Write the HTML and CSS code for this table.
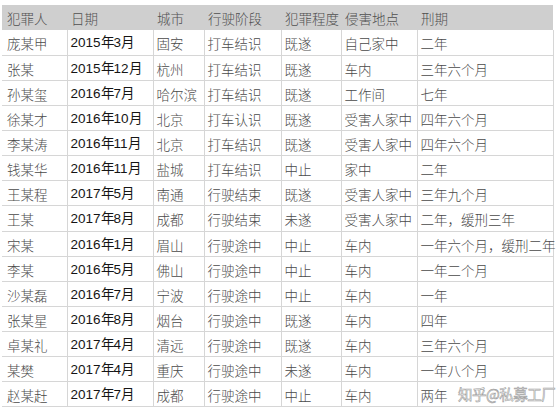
FILE: index.html
```html
<!DOCTYPE html>
<html lang="zh-CN">
<head>
<meta charset="utf-8">
<title>犯罪表</title>
<link rel="stylesheet" href="styles.css">
</head>
<body>
<div class="wrap">
<table class="cases">
<colgroup>
<col class="c1"><col class="c2"><col class="c3"><col class="c4"><col class="c5"><col class="c6"><col class="c7">
</colgroup>
<thead>
<tr><th>犯罪人</th><th>日期</th><th>城市</th><th>行驶阶段</th><th>犯罪程度</th><th>侵害地点</th><th>刑期</th></tr>
</thead>
<tbody>
<tr><td>庞某甲</td><td class="d">2015年3月</td><td>固安</td><td>打车结识</td><td>既遂</td><td>自己家中</td><td>二年</td></tr>
<tr><td>张某</td><td class="d">2015年12月</td><td>杭州</td><td>打车结识</td><td>既遂</td><td>车内</td><td>三年六个月</td></tr>
<tr><td>孙某玺</td><td class="d">2016年7月</td><td>哈尔滨</td><td>打车结识</td><td>既遂</td><td>工作间</td><td>七年</td></tr>
<tr><td>徐某才</td><td class="d">2016年10月</td><td>北京</td><td>打车认识</td><td>既遂</td><td>受害人家中</td><td>四年六个月</td></tr>
<tr><td>李某涛</td><td class="d">2016年11月</td><td>北京</td><td>打车结识</td><td>既遂</td><td>受害人家中</td><td>四年六个月</td></tr>
<tr><td>钱某华</td><td class="d">2016年11月</td><td>盐城</td><td>打车结识</td><td>中止</td><td>家中</td><td>二年</td></tr>
<tr><td>王某程</td><td class="d">2017年5月</td><td>南通</td><td>行驶结束</td><td>既遂</td><td>受害人家中</td><td>三年九个月</td></tr>
<tr><td>王某</td><td class="d">2017年8月</td><td>成都</td><td>行驶结束</td><td>未遂</td><td>受害人家中</td><td>二年，缓刑三年</td></tr>
<tr><td>宋某</td><td class="d">2016年1月</td><td>眉山</td><td>行驶途中</td><td>中止</td><td>车内</td><td>一年六个月，缓刑二年</td></tr>
<tr><td>李某</td><td class="d">2016年5月</td><td>佛山</td><td>行驶途中</td><td>中止</td><td>车内</td><td>一年二个月</td></tr>
<tr><td>沙某磊</td><td class="d">2016年7月</td><td>宁波</td><td>行驶途中</td><td>中止</td><td>车内</td><td>一年</td></tr>
<tr><td>张某星</td><td class="d">2016年8月</td><td>烟台</td><td>行驶途中</td><td>既遂</td><td>车内</td><td>四年</td></tr>
<tr><td>卓某礼</td><td class="d">2017年4月</td><td>清远</td><td>行驶途中</td><td>既遂</td><td>车内</td><td>三年六个月</td></tr>
<tr><td>某樊</td><td class="d">2017年4月</td><td>重庆</td><td>行驶途中</td><td>未遂</td><td>车内</td><td>一年八个月</td></tr>
<tr><td>赵某赶</td><td class="d">2017年7月</td><td>成都</td><td>行驶途中</td><td>中止</td><td>车内</td><td>两年</td></tr>
</tbody>
</table>
<div class="watermark">知乎@私募工厂</div>
</div>
</body>
</html>
```
FILE: styles.css
```css
html, body {
  margin: 0;
  padding: 0;
  background: #ffffff;
}
.wrap {
  position: relative;
  width: 560px;
  height: 418px;
  overflow: hidden;
  padding: 5px 0 0 2px;
  box-sizing: border-box;
}
.cases {
  border-collapse: collapse;
  table-layout: fixed;
  width: 551px;
  font-family: "Noto Sans CJK SC", "Noto Sans", sans-serif;
  font-weight: 300;
  font-size: 13.5px;
  line-height: 18px;
  color: #4a4a4a;
}
.c1 { width: 65px; }
.c2 { width: 86px; }
.c3 { width: 51px; }
.c4 { width: 77px; }
.c5 { width: 60px; }
.c6 { width: 76px; }
.c7 { width: 136px; }
.cases th {
  background: #cfcfcf;
  font-weight: 300;
  text-align: left;
  height: 25px;
  padding: 0 0 0 4px;
  color: #4f4f4f;
  white-space: nowrap;
  box-sizing: border-box;
}
.cases th:first-child, .cases td:first-child { padding-left: 5px; }
.cases td {
  height: 25.13px;
  box-sizing: border-box;
  padding: 2px 0 0 3px;
  border: 1px solid #d6d6d6;
  border-top: none;
  white-space: nowrap;
  overflow: visible;
}
.cases td:first-child { border-left: none; }
.cases td.d {
  font-family: "Liberation Sans", Arial, sans-serif;
  font-weight: 400;
  color: #151515;
  font-size: 13.5px;
}
.watermark {
  position: absolute;
  left: 458px;
  top: 385px;
  font-family: "Noto Sans CJK SC", sans-serif;
  font-size: 14.5px;
  line-height: 18px;
  color: #ffffff;
  -webkit-text-stroke: 0.6px #a0a0a0;
  letter-spacing: -0.5px;
  white-space: nowrap;
}
```
